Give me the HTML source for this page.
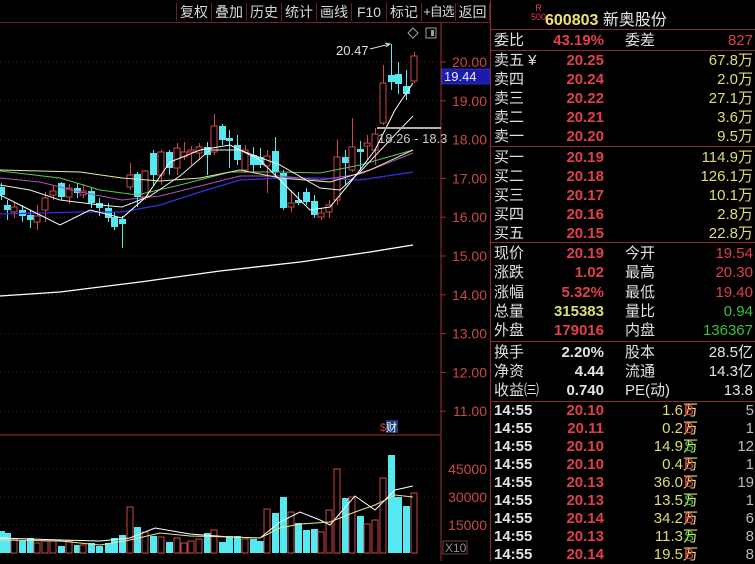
<!DOCTYPE html>
<html><head><meta charset="utf-8">
<style>
*{margin:0;padding:0;box-sizing:border-box}
body{width:755px;height:561px;background:#000;overflow:hidden;position:relative;font-family:"Liberation Sans","Noto Sans CJK SC",sans-serif;}
#chart{position:absolute;left:0;top:0}
.tb{position:absolute;top:0;height:23px;border-bottom:1px solid #7a2020;left:0;width:490px}
.tb span{position:absolute;top:3px;color:#d8d8d8;font-size:14px;line-height:18px;text-align:center;border-left:1px solid #6a2020;white-space:nowrap;overflow:hidden}
#rp{position:absolute;left:490px;top:0;width:265px;height:561px;border-left:1px solid #8a2a2a}
.r{position:absolute;left:0;width:265px;height:19px;font-size:15px;line-height:19px}
.r b{font-weight:normal;position:absolute}
.l{color:#e0e0e0;left:3px}
.l2{color:#e0e0e0;left:134px}
.v1{right:152px;font-weight:bold!important}
.v2{right:3px}
.red{color:#e0404c}.yel{color:#dede72}.grn{color:#3cc23c}.wht{color:#e4e4e4}
.hl{position:absolute;left:0;width:265px;height:1px;background:#8a2a2a}
</style></head><body>
<svg id="chart" width="490" height="561"></svg>
<div class="tb">
<span style="left:176px;width:35px">复权</span><span style="left:211px;width:35px">叠加</span><span style="left:246px;width:35px">历史</span><span style="left:281px;width:35px">统计</span><span style="left:316px;width:35px">画线</span><span style="left:351px;width:35px">F10</span><span style="left:386px;width:35px">标记</span><span style="left:421px;width:34px;font-size:13px;letter-spacing:-1px">+自选</span><span style="left:455px;width:35px;border-right:1px solid #6a2020">返回</span>
</div>
<div id="rp">
<div style="position:absolute;left:40px;top:4px;color:#e0404c;font-size:9px;line-height:9px;text-align:center">R<br>500</div>
<div style="position:absolute;left:54px;top:6px;font-size:16px;color:#e6e6e6"><b style="color:#f0e070">600803</b> 新奥股份</div>
<div class="hl" style="top:29px"></div>
<div class="hl" style="top:50px"></div>
<div class="hl" style="top:146px"></div>
<div class="hl" style="top:242px"></div>
<div class="hl" style="top:341px"></div>
<div class="hl" style="top:401px"></div>
<div id="rows"></div>
</div>
<script>
var R=document.getElementById('rows'),h='';
function row(y,a,b,bc,c,d,dc){h+='<div class="r" style="top:'+(y-9)+'px"><b class="l">'+a+'</b><b class="v1 '+bc+'">'+b+'</b>'+(c?'<b class="l2">'+c+'</b>':'')+'<b class="v2 '+dc+'">'+d+'</b></div>';}
row(40,'委比','43.19%','red','委差','827','red');
var s=[['卖五 ¥','20.25','67.8万'],['卖四','20.24','2.0万'],['卖三','20.22','27.1万'],['卖二','20.21','3.6万'],['卖一','20.20','9.5万'],['买一','20.19','114.9万'],['买二','20.18','126.1万'],['买三','20.17','10.1万'],['买四','20.16','2.8万'],['买五','20.15','22.8万']];
var ys=[60,79,98,117,136,157,176,195,214,233];
s.forEach(function(e,i){row(ys[i],e[0],e[1],'red','',e[2],'yel');});
row(253,'现价','20.19','red','今开','19.54','red');
row(272,'涨跌','1.02','red','最高','20.30','red');
row(292,'涨幅','5.32%','red','最低','19.40','red');
row(311,'总量','315383','yel','量比','0.94','grn');
row(330,'外盘','179016','red','内盘','136367','grn');
row(352,'换手','2.20%','wht','股本','28.5亿','wht');
row(371,'净资','4.44','wht','流通','14.3亿','wht');
row(390,'收益㈢','0.740','wht','PE(动)','13.8','wht');
var t=[['20.10','1.6万','B','5'],['20.11','0.2万','B','1'],['20.10','14.9万','S','12'],['20.10','0.4万','B','1'],['20.13','36.0万','B','19'],['20.13','13.5万','S','1'],['20.14','34.2万','B','6'],['20.13','11.3万','S','8'],['20.14','19.5万','B','8']];
t.forEach(function(e,i){var y=410+i*18-9;h+='<div class="r" style="top:'+y+'px"><b class="l wht" style="font-weight:bold">14:55</b><b class="v1 red">'+e[0]+'</b><b class="yel" style="right:58px">'+e[1]+'</b><b class="'+(e[2]=='B'?'red':'grn')+'" style="left:193px">'+e[2]+'</b><b style="right:2px;color:#bbb">'+e[3]+'</b></div>';});
R.innerHTML=h;

var g='';
function P(p){return 62+(20-p)*38.8;}
for(var p=20;p>=11;p--){var y=P(p);g+='<line x1="0" y1="'+y+'" x2="441" y2="'+y+'" stroke="#6a1818" stroke-dasharray="1,3"/>';g+='<text x="487" y="'+(y+5)+'" fill="#c84848" font-size="14" text-anchor="end">'+p+'.00</text><line x1="441" y1="'+y+'" x2="446" y2="'+y+'" stroke="#a03030"/>';}
[469,497,525].forEach(function(y,i){g+='<line x1="0" y1="'+y+'" x2="441" y2="'+y+'" stroke="#6a1818" stroke-dasharray="1,3"/><text x="487" y="'+(y+5)+'" fill="#c84848" font-size="14" text-anchor="end">'+['45000','30000','15000'][i]+'</text>';});
g+='<line x1="441" y1="23" x2="441" y2="561" stroke="#a03030"/>';
g+='<line x1="0" y1="435" x2="441" y2="435" stroke="#a03030"/>';
g+='<rect x="443" y="541" width="24" height="13" fill="none" stroke="#704040"/><text x="445" y="552" fill="#909090" font-size="12">X10</text>';
var c=[[1,187,195,183,200,0],[7,205,210,200,220,0],[14,207,212,202,218,1],[22,210,216,205,222,0],[30,215,220,210,228,0],[37,216,222,205,230,1],[45,198,210,192,222,1],[53,191,195,186,200,1],[61,183,197,182,200,0],[69,188,197,184,204,1],[77,188,193,183,198,0],[83,191,195,184,198,1],[91,191,203,188,208,0],[99,203,208,198,216,0],[108,208,218,203,222,0],[114,217,227,212,230,0],[122,219,224,216,248,0],[130,175,187,163,190,1],[137,174,197,172,207,0],[145,171,197,170,200,1],[153,153,175,150,185,0],[161,152,175,150,185,1],[169,152,168,150,175,0],[177,148,168,143,175,1],[184,152,157,142,160,1],[191,150,152,146,165,1],[199,147,153,143,160,1],[207,147,155,142,175,0],[214,126,152,114,155,1],[222,126,140,124,145,0],[229,138,141,130,168,0],[237,145,160,135,165,0],[245,150,170,145,173,1],[253,155,165,147,172,0],[260,157,165,148,168,0],[267,156,166,150,193,1],[275,151,172,137,176,0],[283,173,208,170,210,0],[291,203,207,190,212,1],[298,200,203,192,205,0],[306,192,202,188,205,0],[314,201,215,195,218,0],[321,213,217,208,220,1],[329,205,212,200,218,1],[337,157,200,140,205,1],[345,157,163,150,185,0],[352,147,170,118,172,1],[360,149,152,141,170,0],[367,143,146,135,160,1],[375,134,150,128,165,1],[383,83,123,65,125,1],[391,75,82,44,90,0],[398,74,84,62,94,0],[406,86,94,70,100,0],[414,56,81,52,83,1]];
c.forEach(function(k){var col=k[5]?'#d04848':'#54e8f0';g+='<line x1="'+(k[0]+.5)+'" y1="'+k[3]+'" x2="'+(k[0]+.5)+'" y2="'+k[4]+'" stroke="'+col+'"/>';
if(k[5])g+='<rect x="'+(k[0]-3)+'" y="'+k[1]+'" width="6" height="'+Math.max(1,k[2]-k[1])+'" fill="#000" stroke="'+col+'"/>';else g+='<rect x="'+(k[0]-3)+'" y="'+k[1]+'" width="7" height="'+Math.max(2,k[2]-k[1])+'" fill="'+col+'"/>';});
function pl(pts,col,w){g+='<polyline points="'+pts+'" fill="none" stroke="'+col+'" stroke-width="'+(w||1)+'"/>';}
pl('0,214 40,213 80,212 122,212 160,205 200,192 240,180 280,178 320,178 360,180 413,172','#3030e0',1.3);
pl('0,178 40,182 80,192 122,200 160,196 200,186 240,176 280,176 320,180 360,174 413,153','#b050c0');
pl('0,171 60,178 100,190 137,195 180,185 230,172 280,172 320,173 360,165 413,150','#60c060');
pl('0,170 80,172 122,178 160,181 200,178 240,170 280,178 330,182 370,170 413,150','#e8e8a0');
pl('0,185 30,190 60,200 100,205 122,207 150,196 180,176 210,150 240,150 280,165 320,188 340,190 360,172 390,140 413,116','#f0f0f0');
pl('0,195 30,210 60,225 90,210 122,218 145,198 170,162 200,150 230,145 260,160 290,190 310,210 330,207 350,183 375,150 395,110 413,83','#ffffff');
pl('0,296 60,292 140,282 220,271 300,262 370,252 413,245','#ffffff',1.3);
g+='<line x1="377" y1="128" x2="441" y2="128" stroke="#b0b0b0" stroke-width="2"/><text x="378" y="143" fill="#c8c8c8" font-size="13">18.26 - 18.3</text>';
g+='<text x="336" y="55" fill="#e0e0e0" font-size="13">20.47</text><path d="M370 49 L390 44 M385 43 L390 44 L386 47" stroke="#e0e0e0" fill="none"/>';
g+='<path d="M413 28 L418 33 L413 38 L408 33Z" fill="none" stroke="#a0a0a0"/><rect x="426" y="28" width="10" height="10" fill="none" stroke="#a0a0a0"/><rect x="431" y="30" width="3" height="6" fill="#a0a0a0"/>';
g+='<rect x="442" y="69" width="48" height="15" fill="#1c1ca8" stroke="#2a2ad0"/><text x="444" y="81" fill="#e8e8ff" font-size="13">19.44</text>';
g+='<text x="380" y="431" fill="#d04040" font-size="11">$</text><rect x="386" y="420" width="12" height="13" fill="#1a3a7a"/><text x="386" y="431" fill="#fff" font-size="11">财</text>';
var tops=[531,533,539,541,538,543,541,541,546,541,545,545,543,546,543,538,535,507,527,532,536,537,542,538,543,541,539,533,530,542,536,536,539,539,541,509,513,497,512,523,530,529,532,510,469,498,497,516,524,520,478,455,497,506,493];
c.forEach(function(k,i){var hh=553-tops[i];var col=k[5]?'#d04848':'#54e8f0';if(k[5])g+='<rect x="'+(k[0]-3)+'" y="'+(553-hh)+'" width="6" height="'+hh+'" fill="#000" stroke="'+col+'"/>';else g+='<rect x="'+(k[0]-3)+'" y="'+(553-hh)+'" width="7" height="'+hh+'" fill="'+col+'"/>';});
pl('0,538 60,540 100,541 130,538 155,528 190,534 230,537 260,538 280,522 300,512 320,520 330,525 355,496 375,510 395,490 413,486','#ffffff');
pl('0,540 60,541 100,545 130,540 160,533 190,536 230,537 260,538 280,528 300,524 330,522 355,512 375,505 395,495 413,497','#e8e890');
document.getElementById('chart').innerHTML=g;
</script>
</body></html>
